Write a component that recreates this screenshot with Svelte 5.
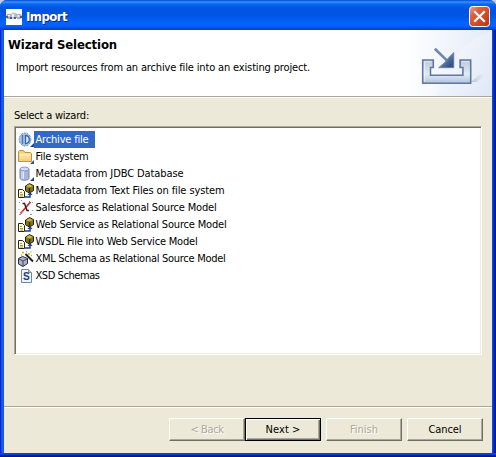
<script>
  const rows = [
    { icon: 'archive', label: 'Archive file', width: 53, selected: true },
    { icon: 'folder', label: 'File system', width: 53 },
    { icon: 'database', label: 'Metadata from JDBC Database', width: 148 },
    { icon: 'cube', label: 'Metadata from Text Files on file system', width: 189 },
    { icon: 'salesforce', label: 'Salesforce as Relational Source Model', width: 181 },
    { icon: 'cube', label: 'Web Service as Relational Source Model', width: 191 },
    { icon: 'cube', label: 'WSDL File into Web Service Model', width: 162 },
    { icon: 'wand', label: 'XML Schema as Relational Source Model', width: 190 },
    { icon: 'xsd', label: 'XSD Schemas', width: 64 }
  ];

  // Spreads the label over its column width through letter spacing.
  function fit(node, width) {
    const natural = node.getBoundingClientRect().width;
    node.style.letterSpacing = `${(width - natural) / node.textContent.length}px`;
  }
</script>

<div class="window">
  <header class="titlebar">
    <svg class="appicon" width="16" height="16" viewBox="0 0 16 16">
      <path fill="#fff" d="M0 0h16v16H0z" />
      <circle cx="3" cy="7.5" r="2.8" fill="#a3abc2" /><circle cx="8" cy="6.8" r="3.2" fill="#b5bfd4" /><circle cx="13" cy="7.5" r="2.8" fill="#a3abc2" />
      <path d="M0 7h2v2H0zM4 8h2v2H4zM8 8h2v2H8zM14 7h2v2h-2z" fill="#4f5a80" />
      <path d="M2 6h2v1.5H2zM6 5h2v3H6zM11.5 6h2v2h-2z" fill="#eef2fa" />
    </svg>
    <span class="caption" use:fit={41}>Import</span>
    <svg class="close" width="21" height="21" viewBox="0 0 21 21">
      <defs><linearGradient id="red" x2="1" y2="1"><stop stop-color="#f0a58b" /><stop offset=".3" stop-color="#e25d3a" /><stop offset="1" stop-color="#bd3110" /></linearGradient></defs>
      <rect x=".5" y=".5" width="20" height="20" rx="3" fill="url(#red)" stroke="#fff" />
      <path d="M6 6l9 9M15 6l-9 9" stroke="#fff" stroke-width="2.2" stroke-linecap="square" />
    </svg>
  </header>

  <main>
    <section class="banner">
      <div class="heading">
        <h1><span use:fit={109}>Wizard Selection</span></h1>
        <p><span use:fit={294}>Import resources from an archive file into an existing project.</span></p>
      </div>
      <svg class="art" width="88" height="66" viewBox="404 30 88 66">
        <defs>
          <linearGradient id="sky" x1="0" y1="0" x2="1" y2="1"><stop stop-color="#fff" /><stop offset="1" stop-color="#dce6f5" /></linearGradient>
          <linearGradient id="low" x1="0" x2="1"><stop stop-color="#fff" /><stop offset="1" stop-color="#e3ebf8" /></linearGradient>
          <linearGradient id="tray" x2="0" y2="1"><stop stop-color="#b9c9dc" /><stop offset=".6" stop-color="#e2ebf5" /><stop offset="1" stop-color="#b0c3da" /></linearGradient>
          <linearGradient id="head" x2="1" y2="1"><stop stop-color="#a4b8d6" /><stop offset=".8" stop-color="#345486" /></linearGradient>
          <linearGradient id="shade" x1="0" x2="1"><stop stop-color="#b4bed0" /><stop offset="1" stop-color="#dfe7f3" stop-opacity="0" /></linearGradient>
        </defs>
        <path d="M404 30h88v66h-88z" fill="url(#low)" />
        <path d="M436 96C446 62 464 40 492 31v65z" fill="url(#sky)" opacity=".6" />
        <path d="M471 82l8-7 8-1-10 8z" fill="url(#shade)" />
        <path d="M422.7 60h10.6v7.5h-2.8v7.8h32.4v-7.8h-2.8v-7.5h10.6v23.3h-48z" fill="url(#tray)" stroke="#6079a0" stroke-width="1.6" />
        <path d="M424.4 61.7h7.2M424.4 61.7v20M462 61.7h7" fill="none" stroke="#f4f8fd" opacity=".7" />
        <path d="M434.8 48.8l12 11.6" stroke="#6e87ad" stroke-width="2.6" />
        <path d="M453.8 52.5v15.2h-15.2l6-5 3-4z" fill="url(#head)" stroke="#6a82a8" stroke-width=".8" />
      </svg>
    </section>

    <section class="body">
      <label for="wizards"><span use:fit={75}>Select a wizard:</span></label>
      <div class="list" id="wizards">
        {#each rows as row}
          <div class="row">
            <svg width="16" height="16" viewBox="0 0 16 16">
              {#if row.icon === 'archive'}
                <ellipse cx="7" cy="7.5" rx="5.8" ry="6.5" fill="#a9c6e8" stroke="#5f88bd" stroke-dasharray="2 1" />
                <path d="M4.5 3v9" stroke="#4a78b4" stroke-width="1.4" /><path d="M7.5 3.5v8c5 0 5-8 0-8z" fill="#dbe8f7" stroke="#3567a8" stroke-width="1.3" />
                <path d="M16 11v4h-4z" fill="#174a96" />
              {:else if row.icon === 'folder'}
                <path d="M.5 12.5v-10l1-1h4l1.5 2h5.5l1 1v8z" fill="#f7cf77" stroke="#c6913f" />
                <path d="M1.5 4.5h11v3h-11z" fill="#ffebb0" /><path d="M1.5 7.5h11V10h-11z" fill="#fbdc91" />
                <path d="M16 11v4h-4z" fill="#245690" />
              {:else if row.icon === 'database'}
                <path d="M2 3v9c0 3 9 3 9 0V3" fill="#a6b5dc" stroke="#7987b3" />
                <path d="M4 4v9M5.5 4v9" stroke="#e5ebfb" /><ellipse cx="6.5" cy="3" rx="4.5" ry="2" fill="#d3dcf2" stroke="#8796c0" />
                <path d="M16 11v4h-4z" fill="#263e86" />
              {:else if row.icon === 'cube'}
                <path d="M.5 6.5h4l2 2v6h-6z" fill="#fffbd0" stroke="#27261c" />
                <path d="M2 9.5h2M2 11.5h3M2 13h3" stroke="#8a853e" stroke-width=".8" />
                <path d="M7.5 3l4-2.4 4 2v5L11.5 10l-4-2.2z" fill="#887818" stroke="#211e0b" />
                <path d="M8 3l3.5-1.8L15 3l-3.5 1.6z" fill="#c8b945" /><path d="M11.5 5v4.5" stroke="#252006" stroke-width="1.5" />
                <path d="M7 14h5v-3" fill="none" stroke="#203f9d" stroke-width="1.5" /><path d="M9.5 12l2.5-3 2.5 3z" fill="#203f9d" />
              {:else if row.icon === 'salesforce'}
                <path d="M1 2.5h1M3 .5h1M11 1.5h1M14 2.5h1M.5 9.5h1M1 14.5h2M12 14.5h2M14 10.5h1" stroke="#879bb0" />
                <path d="M2.5 13.5L12.5 2" stroke="#d92a20" stroke-width="1.8" />
                <path d="M4.5 3.5h2l2.5 7h2" fill="none" stroke="#351f20" stroke-width="1.4" /><path d="M2 13l3-2" stroke="#f3664f" />
              {:else if row.icon === 'wand'}
                <path d="M.5 7.5l4-2 5 2v5l-4.5 3-4.5-2.5z" fill="#aab1cc" stroke="#27293b" />
                <path d="M1 8l4 2 4-2M5 10v5" fill="none" stroke="#42465f" /><path d="M7.5 3l7.5 7.5" stroke="#20202a" stroke-width="2" />
                <path d="M4 1.5h2M8 .5h1M10 3h2M12.5 1h1M3 4h1M13 4.5h1" stroke="#d6a51e" stroke-width="1.5" />
              {:else}
                <path d="M3.5 1.5h7l3 3v10h-10z" fill="#edf5ff" stroke="#7087a9" /><path d="M10.5 1.5v3h3" fill="#d8c48e" stroke="#9a9173" />
                <text x="5.1" y="12" fill="#173d79" font-family="Liberation Sans, sans-serif" font-size="10" font-weight="bold">S</text>
              {/if}
            </svg>
            <span class="name" class:selected={row.selected}><span use:fit={row.width}>{row.label}</span></span>
          </div>
        {/each}
      </div>
    </section>

    <footer>
      <button disabled><span use:fit={33}>&lt; Back</span></button>
      <button class="default"><span use:fit={35}>Next &gt;</span></button>
      <button class="apart" disabled><span use:fit={28}>Finish</span></button>
      <button class="cancel"><span use:fit={33}>Cancel</span></button>
    </footer>
  </main>
</div>

<style>
  :global(body) { margin: 0; background: #c6cbe0; }
  * { box-sizing: border-box; }
  .window {
    width: 496px; height: 457px; padding: 0 4px 4px; display: flex; flex-direction: column;
    border-radius: 7px 7px 0 0; overflow: hidden;
    background: linear-gradient(90deg, #0019cf 0, #0831d9 1px, #166aee 2px, #0855dd 4px, #0855dd 492px, #0441d8 493px, #0029bd 494px, #00138c 496px);
    box-shadow: inset 0 -1px #00138c, inset 0 -2px #001b9e, inset 0 -4px #0441d8;
    font: 11px/17px Tahoma, "DejaVu Sans Condensed", "DejaVu Sans", sans-serif;
    font-stretch: condensed; color: #000;
  }
  span { display: inline-block; white-space: nowrap; }
  .titlebar {
    height: 30px; margin: 0 -4px; padding: 3px 6px 0; display: flex; align-items: center; flex: none;
    background: linear-gradient(#0646d0 0, #3990ff 2px, #0868f3 4px, #0054e3 8px, #0055e5 16px, #0262fb 22px, #0262fa 26px, #004ee1 28px, #003dca 30px);
  }
  .caption {
    margin-left: 4px; color: #fff; font: bold 13px/20px "DejaVu Sans Condensed", "DejaVu Sans", sans-serif;
    font-stretch: condensed; text-shadow: 1px 1px #0a2c87;
  }
  .close { margin-left: auto; }
  main { flex: 1; min-height: 0; display: flex; flex-direction: column; background: #ece9d8; }
  .banner { height: 67px; display: flex; justify-content: space-between; flex: none; background: #fff; border-bottom: 1px solid #aca899; }
  .heading { padding: 7px 0 0 4px; }
  h1 { margin: 0; font-size: 13px; line-height: 16px; font-weight: bold; }
  p { margin: 6px 0 0 8px; line-height: 17px; }
  .body { padding: 9px 10px 0; border-top: 1px solid #fff; flex: 1; }
  label { display: block; height: 19px; }
  .list {
    height: 229px; padding: 4px 2px 3px 3px; background: #fff; border: 1px solid #aca899; border-right-color: #fff; border-bottom-color: #fff;
    box-shadow: inset 1px 1px #716f64, inset -1px -1px #f1efe2;
  }
  .row { height: 17px; display: flex; align-items: center; }
  .row svg { flex: none; }
  .name { height: 17px; padding: 0 7px 0 1.5px; line-height: 18px; }
  .selected { color: #fff; background: #316ac5; }
  footer { height: 47px; padding: 11px 9px 0 0; display: flex; justify-content: flex-end; flex: none; border-top: 1px solid #aca899; box-shadow: inset 0 1px #fff; }
  button {
    width: 76px; height: 23px; padding: 0; font: inherit; line-height: 19px; color: #000; background: #ece9d8; border: 1px solid; border-radius: 0;
    border-color: #fff #716f64 #716f64 #fff; box-shadow: inset -1px -1px #aca899;
  }
  button:disabled { color: #aca899; text-shadow: 1px 1px #fff; }
  .default { border-color: #000; box-shadow: inset 1px 1px #fff, inset -1px -1px #716f64, inset -2px -2px #aca899; }
  .apart, .cancel { margin-left: 5px; }
</style>
